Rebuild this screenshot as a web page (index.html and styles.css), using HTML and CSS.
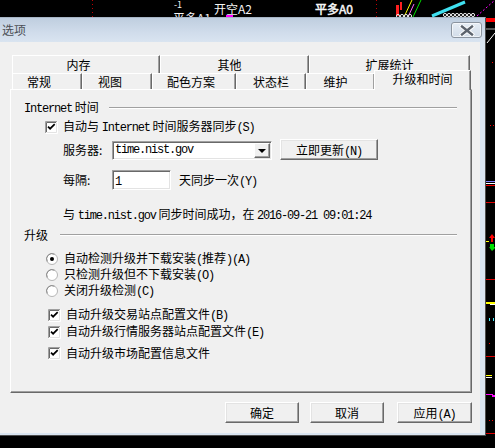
FILE: index.html
```html
<!DOCTYPE html>
<html lang="zh-CN">
<head>
<meta charset="utf-8">
<title>选项</title>
<link rel="stylesheet" href="styles.css">
</head>
<body>
<svg class="defs" width="0" height="0">
  <defs>
    <g id="cb">
      <rect x="1" y="1" width="11" height="11" fill="#fff"/>
      <path d="M0.5 12V0.5H12" stroke="#a0a0a0" fill="none"/>
      <path d="M1.5 11V1.5H11" stroke="#696969" fill="none"/>
      <path d="M0.5 12.5H12.5V0.5" stroke="#fff" fill="none"/>
      <path d="M1.5 11.5H11.5V1.5" stroke="#e3e3e3" fill="none"/>
      <path d="M3 5.6l2.1 2.1 4.6-4.6" stroke="#000" stroke-width="1.7" fill="none"/>
    </g>
    <g id="rb">
      <circle cx="6" cy="6" r="5.5" fill="#fff" stroke="#b5b5b5"/>
      <path d="M1.3 8.5A5.3 5.3 0 0 1 8.5 1.3" stroke="#8a8a8a" fill="none"/>
    </g>
  </defs>
</svg>

<svg class="chart" width="495" height="448" viewBox="0 0 495 448">
  <line x1="92.5" y1="0" x2="92.5" y2="17" stroke="#c00000" stroke-dasharray="1 3"/>
  <line x1="376.5" y1="0" x2="376.5" y2="17" stroke="#c00000" stroke-dasharray="1 3"/>
  <text x="174" y="8" class="lbl sm">-1</text>
  <text x="173" y="23" class="lbl">平多A1</text>
  <text x="214" y="14" class="lbl">开空A2</text>
  <text x="315" y="14" class="lbl bold">平多A0</text>
  <rect x="226" y="15" width="7" height="2" fill="#ff00ff"/>
  <rect x="396" y="5" width="3" height="11" fill="#ff2020"/>
  <rect x="400" y="2" width="2" height="8" fill="#ff2020"/>
  <line x1="404" y1="17" x2="412" y2="0" stroke="#ffff00"/>
  <line x1="408" y1="17" x2="414" y2="4" stroke="#ff66ff"/>
  <line x1="413" y1="17" x2="421" y2="0" stroke="#00e000"/>
  <line x1="432" y1="16" x2="465" y2="2" stroke="#40e0f0" stroke-width="3"/>
  <g fill="none" stroke="#e8e8e8">
    <circle cx="398" cy="16" r="1.6"/><circle cx="402" cy="16" r="1.6"/><circle cx="406" cy="16" r="1.6"/><circle cx="410" cy="16" r="1.6"/>
    <circle cx="445" cy="15" r="1.6"/><circle cx="449" cy="15" r="1.6"/><circle cx="453" cy="15" r="1.6"/><circle cx="457" cy="15" r="1.6"/><circle cx="461" cy="15" r="1.6"/><circle cx="465" cy="15" r="1.6"/><circle cx="469" cy="15" r="1.6"/><circle cx="473" cy="15" r="1.6"/>
  </g>
  <line x1="477" y1="16" x2="495" y2="0" stroke="#ff00ff" stroke-dasharray="2 2"/>
  <rect x="485" y="18" width="10" height="4" fill="#ff0000"/>
  <rect x="486" y="28" width="9" height="2" fill="#555"/>
  <line x1="487" y1="43" x2="495" y2="33" stroke="#fff"/>
  <rect x="492" y="62" width="1" height="1" fill="#f00"/>
  <rect x="490" y="125" width="1" height="1" fill="#f00"/>
  <rect x="493" y="125" width="1" height="1" fill="#f00"/>
  <rect x="486" y="181" width="9" height="1" fill="#8080ff"/>
  <rect x="486" y="183" width="9" height="1" fill="#fff"/>
  <rect x="486" y="185" width="9" height="1" fill="#f00"/>
  <rect x="486" y="202" width="9" height="1" fill="#d00"/>
  <path d="M489 238l3-4 3 4h-2v4h-2v-4z" fill="#f00"/>
  <rect x="486" y="241" width="3" height="1" fill="#ff0"/>
  <path d="M490 244h4v3h2l-4 4-3-4h1z" fill="#00e000"/>
  <rect x="486" y="279" width="9" height="1" fill="#d00"/>
  <rect x="486" y="302" width="9" height="2" fill="#ff0"/>
  <rect x="490" y="304" width="5" height="1" fill="#fff"/>
  <rect x="489" y="318" width="1" height="3" fill="#4ef"/>
  <rect x="493" y="318" width="1" height="3" fill="#4ef"/>
  <rect x="489" y="343" width="1" height="1" fill="#f00"/>
  <rect x="486" y="356" width="9" height="1" fill="#d00"/>
  <rect x="486" y="375" width="6" height="1" fill="#ff0"/>
  <rect x="486" y="377" width="6" height="1" fill="#fff"/>
  <rect x="486" y="394" width="7" height="1" fill="#f0f"/>
  <rect x="492" y="395" width="3" height="2" fill="#f0f"/>
  <rect x="489" y="420" width="1" height="1" fill="#f00"/>
  <rect x="492" y="420" width="1" height="1" fill="#f00"/>
  <rect x="486" y="433" width="9" height="1" fill="#d00"/>
</svg>

<div class="win">
  <div class="titlebar">
    <span class="title">选项</span>
    <div class="close">
      <svg width="16" height="11" viewBox="0 0 16 11">
        <path d="M3 1.5l10 8M13 1.5l-10 8" stroke="#fff" stroke-width="4.2" stroke-linecap="square"/>
        <path d="M3 1.5l10 8M13 1.5l-10 8" stroke="#5d646e" stroke-width="2.4" stroke-linecap="square"/>
      </svg>
    </div>
  </div>
  <div class="client">
    <div class="tabs">
      <div class="row back">
        <div class="tab w148 pr15">内存</div>
        <div class="tab w149 pr10">其他</div>
        <div class="tab w161">扩展统计</div>
      </div>
      <div class="row front">
        <div class="tab w70 pr16">常规</div>
        <div class="tab w70 pr14">视图</div>
        <div class="tab w84 pr6">配色方案</div>
        <div class="tab w70">状态栏</div>
        <div class="tab w69 pr10">维护</div>
        <div class="tab sel">升级和时间</div>
      </div>
    </div>
    <div class="panel">
      <div class="hdr"><span><span class="en">Internet</span> 时间</span><i class="rule r1"></i></div>
      <div class="line cbline">
        <svg class="box" width="13" height="13"><use href="#cb"/></svg>
        <span>自动与 <span class="en">Internet</span> 时间服务器同步<span class="en">(S)</span></span>
      </div>
      <div class="field srv">
        <span class="flabel">服务器:</span>
        <div class="combo">
          <span class="ctext en">time.nist.gov</span>
          <span class="ddbtn"><i class="tri"></i></span>
        </div>
        <div class="btn wnow">立即更新<span class="en">(N)</span></div>
      </div>
      <div class="field intv">
        <span class="flabel">每隔:</span>
        <div class="edit"><span class="en">1</span></div>
        <span class="after">天同步一次<span class="en">(Y)</span></span>
      </div>
      <div class="line status"><span>与 <span class="en">time.nist.gov</span> 同步时间成功，在 <span class="en">2016-09-21 09:01:24</span></span></div>
      <div class="hdr h2"><span>升级</span><i class="rule r2"></i></div>
      <div class="radios">
        <div class="line ropt"><svg class="box" width="12" height="12"><use href="#rb"/><circle cx="6" cy="6" r="2" fill="#000"/></svg><span>自动检测升级并下载安装<span class="en">(</span>推荐<span class="en">)(A)</span></span></div>
        <div class="line ropt"><svg class="box" width="12" height="12"><use href="#rb"/></svg><span>只检测升级但不下载安装<span class="en">(O)</span></span></div>
        <div class="line ropt"><svg class="box" width="12" height="12"><use href="#rb"/></svg><span>关闭升级检测<span class="en">(C)</span></span></div>
      </div>
      <div class="line copt c1"><svg class="box" width="13" height="13"><use href="#cb"/></svg><span>自动升级交易站点配置文件<span class="en">(B)</span></span></div>
      <div class="line copt c2"><svg class="box" width="13" height="13"><use href="#cb"/></svg><span>自动升级行情服务器站点配置文件<span class="en">(E)</span></span></div>
      <div class="line copt c3"><svg class="box" width="13" height="13"><use href="#cb"/></svg><span>自动升级市场配置信息文件</span></div>
    </div>
    <div class="footer">
      <div class="btn wok">确定</div>
      <div class="btn wcancel">取消</div>
      <div class="btn wapply">应用<span class="en">(A)</span></div>
    </div>
  </div>
</div>
</body>
</html>
```
FILE: styles.css
```css
* { box-sizing: border-box; }
html, body { margin: 0; padding: 0; }
body {
  width: 495px;
  height: 448px;
  overflow: hidden;
  position: relative;
  background: #000;
  font-family: "Noto Sans CJK SC", sans-serif;
  font-size: 12px;
  color: #000;
}
.defs { position: absolute; }
.chart { position: absolute; left: 0; top: 0; }
.lbl { fill: #f4f4f4; font-family: "Noto Sans CJK SC", sans-serif; font-size: 12px; }
.lbl.sm { font-size: 9px; }
.lbl.bold { stroke: #f4f4f4; stroke-width: 0.5px; }

.en {
  font-family: "Liberation Mono", monospace;
  font-size: 12px;
  letter-spacing: -1.2px;
}

.win {
  position: absolute;
  left: 0;
  top: 17px;
  width: 486px;
  height: 419px;
  background: #d9e4f0;
  border-top: 1px solid #a7b5c5;
  border-right: 1px solid #4d4d4d;
  border-bottom: 1px solid #4d4d4d;
}
.titlebar {
  height: 24px;
  display: flex;
  justify-content: space-between;
  align-items: flex-start;
  padding: 4px 3px 0 2px;
  background: linear-gradient(#bfcedf, #d0dceb 60%, #d9e4f0);
}
.title { line-height: 16px; color: #4b4f55; font-size: 12px; }
.close {
  width: 31px;
  height: 16px;
  border: 1px solid #8b949f;
  border-radius: 3px;
  background: linear-gradient(#e6edf5, #d2dce8);
  box-shadow: inset 0 0 0 1px rgba(255,255,255,0.6);
  display: flex;
  align-items: center;
  justify-content: center;
}

.client {
  width: 480px;
  height: 391px;
  background: #f0f0f0;
  padding: 13px 0 0 10px;
}

.tabs { width: 462px; }
.row { display: flex; padding-left: 2px; }
.back { height: 18px; }
.front { height: 16px; align-items: flex-end; }
.tab {
  height: 100%;
  border-top: 1px solid #fff;
  border-left: 1px solid #fff;
  border-right: 1px solid #696969;
  box-shadow: inset -1px 0 #a0a0a0;
  text-align: center;
  background: #f0f0f0;
  white-space: nowrap;
}
.back .tab { line-height: 17px; }
.front .tab { line-height: 15px; height: 16px; }
.front .tab.sel {
  width: 97px;
  height: 20px;
  margin-bottom: -1px;
  position: relative;
  z-index: 1;
  line-height: 16px;
  margin-left: -1px;
}
.w148 { width: 148px; }
.w149 { width: 149px; }
.w161 { width: 161px; }
.w70 { width: 70px; }
.w69 { width: 69px; }
.w84 { width: 84px; }
.pr6 { padding-right: 6px; }
.pr10 { padding-right: 10px; }
.pr14 { padding-right: 14px; }
.pr15 { padding-right: 15px; }
.pr16 { padding-right: 16px; }

.panel {
  width: 462px;
  height: 304px;
  border-top: 1px solid #fff;
  border-left: 1px solid #fff;
  border-right: 1px solid #696969;
  border-bottom: 1px solid #696969;
  box-shadow: inset -1px -1px #a0a0a0;
  display: flex;
  flex-direction: column;
}

.hdr {
  height: 16px;
  line-height: 16px;
  display: flex;
  align-items: center;
  padding: 0 14px 0 13px;
  margin-top: 10px;
  white-space: nowrap;
}
.rule {
  flex: 1;
  height: 2px;
  border-top: 1px solid #a0a0a0;
  border-bottom: 1px solid #fff;
}
.r1 { margin-left: 10px; }
.r2 { margin-left: 12px; }
.h2 { margin-top: 4px; }

.line {
  display: flex;
  align-items: center;
  height: 16px;
  line-height: 16px;
  white-space: nowrap;
}
.box { flex: none; display: block; }
.cbline { height: 18px; margin-top: 2px; padding-left: 34px; }
.cbline .box { margin-right: 5px; }

.field {
  display: flex;
  align-items: flex-start;
  height: 21px;
  padding-left: 52px;
  white-space: nowrap;
}
.flabel { width: 49px; line-height: 21px; }
.srv { margin-top: 3px; }
.intv { margin-top: 9px; }

.combo {
  width: 160px;
  height: 19px;
  margin-top: 2px;
  background: #fff;
  border: 1px solid;
  border-color: #a0a0a0 #fff #fff #a0a0a0;
  box-shadow: inset 1px 1px #696969, inset -1px -1px #e3e3e3;
  display: flex;
  align-items: center;
  padding: 1px 1px 1px 2px;
}
.ctext { flex: 1; line-height: 15px; }
.ddbtn {
  width: 16px;
  height: 15px;
  background: #f0f0f0;
  border: 1px solid;
  border-color: #fff #696969 #696969 #fff;
  box-shadow: inset -1px -1px #a0a0a0;
  display: flex;
  align-items: center;
  justify-content: center;
}
.tri {
  width: 0;
  height: 0;
  border-left: 4px solid transparent;
  border-right: 4px solid transparent;
  border-top: 4px solid #000;
  margin-right: 1px;
}

.btn {
  height: 21px;
  line-height: 19px;
  text-align: center;
  background: #f0f0f0;
  border: 1px solid;
  border-color: #fff #696969 #696969 #fff;
  box-shadow: inset -1px -1px #a0a0a0, inset 1px 1px #e3e3e3;
  white-space: nowrap;
}
.wnow { width: 98px; margin-left: 8px; }

.edit {
  width: 59px;
  height: 20px;
  margin-top: 1px;
  background: #fff;
  border: 1px solid;
  border-color: #a0a0a0 #fff #fff #a0a0a0;
  box-shadow: inset 1px 1px #696969, inset -1px -1px #e3e3e3;
  padding-left: 2px;
  line-height: 17px;
}
.after { margin-left: 8px; line-height: 21px; }

.status { margin-top: 17px; padding-left: 52px; }

.radios { margin-top: 8px; }
.ropt { padding-left: 35px; }
.ropt .box { margin-right: 6px; }

.copt { padding-left: 37px; }
.copt .box { margin-right: 5px; }
.c1 { margin-top: 8px; }
.c2 { margin-top: 1px; }
.c3 { margin-top: 5px; }

.footer {
  display: flex;
  justify-content: flex-end;
  margin-top: 9px;
  padding-right: 8px;
}
.wok { width: 74px; }
.wcancel { width: 74px; margin-left: 11px; }
.wapply { width: 75px; margin-left: 13px; }
```
